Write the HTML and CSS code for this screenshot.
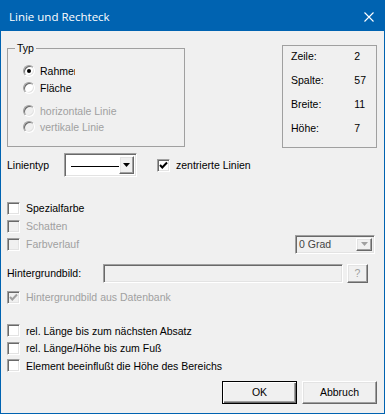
FILE: index.html
```html
<!DOCTYPE html>
<html lang="de">
<head>
    <title>Linie und Rechteck</title>
    <link rel="stylesheet" href="styles.css">
</head>
<body>
<div class="window">
    <div class="titlebar">
        <span class="title">Linie und Rechteck</span>
        <svg class="close" width="10" height="10" viewBox="0 0 10 10">
            <path d="M0.5 0.5 L9.5 9.5 M9.5 0.5 L0.5 9.5" stroke="#fff" stroke-width="1.1" fill="none"/>
        </svg>
    </div>

    <div class="content">
        <div class="top-row">
            <fieldset class="group">
                <legend>Typ</legend>
                <div class="radio-list">
                    <label class="opt"><span class="radio checked"></span><span class="clip">Rahmen</span></label>
                    <label class="opt row-2"><span class="radio"></span>Fläche</label>
                    <label class="opt row-3 disabled"><span class="radio"></span>horizontale Linie</label>
                    <label class="opt disabled"><span class="radio"></span>vertikale Linie</label>
                </div>
            </fieldset>

            <div class="info">
                <span>Zeile:</span><span>2</span>
                <span>Spalte:</span><span>57</span>
                <span>Breite:</span><span>11</span>
                <span>Höhe:</span><span>7</span>
            </div>
        </div>

        <div class="line-row">
            <span class="line-label">Linientyp</span>
            <div class="combo sunken">
                <span class="combo-value"><span class="line-sample"></span></span>
                <span class="combo-btn raised">
                    <svg width="7" height="4" viewBox="0 0 7 4"><polygon points="0,0 7,0 3.5,4" fill="#000"/></svg>
                </span>
            </div>
            <label class="check centered">
                <span class="box sunken">
                    <svg width="9" height="9" viewBox="0 0 9 9"><polyline points="1,4 3.3,6.5 8,1.5" stroke="#000" stroke-width="2" fill="none"/></svg>
                </span>
                zentrierte Linien
            </label>
        </div>

        <div class="checks">
            <label class="check row"><span class="box sunken"></span>Spezialfarbe</label>
            <label class="check row disabled"><span class="box sunken"></span>Schatten</label>
            <div class="row split">
                <label class="check disabled"><span class="box sunken"></span>Farbverlauf</label>
                <div class="combo small sunken disabled">
                    <span class="combo-value">0 Grad</span>
                    <span class="combo-btn raised">
                        <svg width="7" height="4" viewBox="0 0 7 4"><polygon points="0,0 7,0 3.5,4" fill="#a0a0a0"/></svg>
                    </span>
                </div>
            </div>
        </div>

        <div class="image-row">
            <span class="image-label">Hintergrundbild:</span>
            <span class="field sunken"></span>
            <span class="button raised small-btn">?</span>
        </div>

        <label class="check row db disabled">
            <span class="box sunken">
                <svg width="9" height="9" viewBox="0 0 9 9"><polyline points="1,4 3.3,6.5 8,1.5" stroke="#a0a0a0" stroke-width="2" fill="none"/></svg>
            </span>
            Hintergrundbild aus Datenbank
        </label>

        <div class="options">
            <label class="check row"><span class="box sunken"></span>rel. Länge bis zum nächsten Absatz</label>
            <label class="check row"><span class="box sunken"></span>rel. Länge/Höhe bis zum Fuß</label>
            <label class="check row"><span class="box sunken"></span>Element beeinflußt die Höhe des Bereichs</label>
        </div>

        <div class="buttons">
            <span class="button default">OK</span>
            <span class="button raised">Abbruch</span>
        </div>
    </div>
</div>
</body>
</html>
```

FILE: styles.css
```css
body {
    margin: 0;
    font-family: "Liberation Sans", Arial, sans-serif;
    font-size: 10.5px;
    color: #000;
}

.window {
    width: 385px;
    height: 414px;
    box-sizing: border-box;
    border: 1px solid #0063b1;
    background-color: #f0f0f0;
}

.titlebar {
    height: 30px;
    background-color: #0063b1;
    display: flex;
    align-items: center;
    justify-content: space-between;
    padding: 0 10px 0 8px;
}

.title {
    font-family: "Open Sans", "Noto Sans", sans-serif;
    font-size: 11.5px;
    color: #fff;
}

.close {
    margin-top: 1px;
}

.content {
    padding: 11px 7px 0 6px;
}

/* 3d borders */
.sunken {
    border: 1px solid;
    border-color: #a0a0a0 #fff #fff #a0a0a0;
    box-shadow: inset 1px 1px 0 #696969, inset -1px -1px 0 #e3e3e3;
}

.raised {
    border: 1px solid;
    border-color: #fff #696969 #696969 #fff;
    box-shadow: inset -1px -1px 0 #a0a0a0, inset 1px 1px 0 #e3e3e3;
    background-color: #f0f0f0;
}

.top-row {
    display: flex;
    justify-content: space-between;
    align-items: flex-start;
}

.group {
    margin: 0;
    padding: 8px 0 11px 0;
    width: 178px;
    box-sizing: border-box;
    border: 1px solid #a0a0a0;
    min-width: 0;
}

.group legend {
    margin-left: 7px;
    padding: 0 2px;
    line-height: 13px;
}

.radio-list {
    padding-left: 15px;
}

.opt {
    display: flex;
    align-items: center;
    height: 16px;
}

.opt.row-2 {
    margin-top: 1px;
}

.opt.row-3 {
    margin-top: 7px;
}

.radio {
    width: 12px;
    height: 12px;
    box-sizing: border-box;
    border-radius: 50%;
    border: 1px solid;
    border-color: #a0a0a0 #fff #fff #a0a0a0;
    box-shadow: inset 1px 1px 0 #696969, inset -1px -1px 0 #e3e3e3;
    background-color: #fff;
    margin-right: 5px;
    display: flex;
    align-items: center;
    justify-content: center;
}

.radio.checked::after {
    content: "";
    width: 4px;
    height: 4px;
    border-radius: 50%;
    background-color: #000;
}

.clip {
    width: 35px;
    overflow: hidden;
    white-space: nowrap;
}

.disabled {
    color: #a0a0a0;
}

.disabled .radio,
.disabled .box {
    background-color: #f0f0f0;
}

.info {
    margin-top: 3px;
    width: 95px;
    height: 103px;
    box-sizing: border-box;
    border: 1px solid #a0a0a0;
    padding: 0 10px 0 8px;
    display: grid;
    grid-template-columns: 1fr auto;
    grid-auto-rows: 20px;
    row-gap: 4px;
    align-items: center;
}

.line-row {
    display: flex;
    align-items: center;
    height: 24px;
    margin-top: 5px;
}

.line-label {
    width: 57px;
}

.combo {
    display: flex;
    box-sizing: border-box;
    width: 73px;
    height: 24px;
    padding: 2px;
    background-color: #fff;
}

.combo-value {
    flex: 1;
    display: flex;
    align-items: center;
}

.line-sample {
    width: 48px;
    height: 1px;
    background-color: #000;
    margin: 2px 0 0 4px;
}

.combo-btn {
    width: 17px;
    box-sizing: border-box;
    display: flex;
    align-items: center;
    justify-content: center;
}

.combo.small {
    width: 80px;
    height: 19px;
    margin-right: 2px;
    background-color: #f0f0f0;
}

.combo.small .combo-value {
    color: #444;
    padding-left: 1px;
}

.combo.small .combo-btn {
    width: 16px;
}

.check {
    display: flex;
    align-items: center;
}

.box {
    width: 13px;
    height: 13px;
    box-sizing: border-box;
    background-color: #fff;
    margin-right: 6px;
    display: flex;
    align-items: center;
    justify-content: center;
}

.check.centered {
    margin-left: 20px;
}

.checks {
    margin-top: 22px;
}

.row {
    height: 18px;
}

.split {
    display: flex;
    align-items: center;
    justify-content: space-between;
}

.image-row {
    display: flex;
    align-items: center;
    height: 20px;
    margin-top: 10px;
}

.image-label {
    width: 96px;
}

.field {
    width: 240px;
    height: 19px;
    box-sizing: border-box;
}

.button {
    box-sizing: border-box;
    display: flex;
    align-items: center;
    justify-content: center;
    width: 75px;
    height: 23px;
}

.small-btn {
    width: 21px;
    height: 19px;
    margin-left: 4px;
    color: #a0a0a0;
}

.db {
    margin-top: 5px;
}

.options {
    margin-top: 16px;
}

.options .row {
    height: 17.5px;
}

.buttons {
    display: flex;
    justify-content: flex-end;
    gap: 5px;
    margin-top: 6px;
}

.button.default {
    border: 1px solid #000;
    box-shadow: inset 1px 1px 0 #fff, inset -1px -1px 0 #696969, inset -2px -2px 0 #a0a0a0;
    background-color: #f0f0f0;
}
```
